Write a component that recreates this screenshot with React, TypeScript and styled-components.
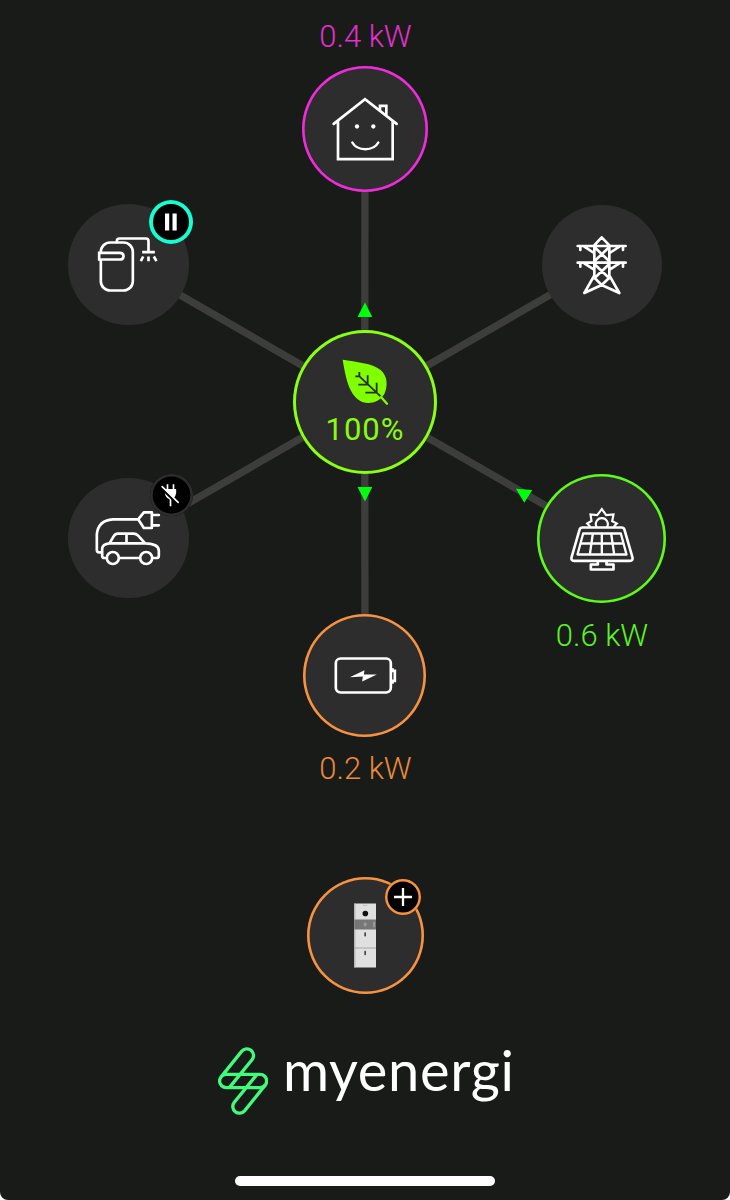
import React from "react";
import styled, { createGlobalStyle } from "styled-components";

const GlobalStyle = createGlobalStyle`
  html, body { margin: 0; padding: 0; background: #fff; }
  * { box-sizing: border-box; }
`;

const SURFACE = "#2d2d2d";
const ORANGE = "#f79240";

const Screen = styled.main`
  display: flex;
  flex-direction: column;
  align-items: center;
  width: 730px;
  height: 1200px;
  overflow: hidden;
  background: #191b18;
  border-radius: 0 0 8px 8px;
  font-family: Roboto, "Liberation Sans", sans-serif;
`;

const FlowMap = styled.section`
  position: relative;
  flex: none;
  width: 730px;
  height: 800px;
`;

const Wires = styled.svg`
  position: absolute;
  inset: 0;
`;

const Disc = styled.div<{ $r: number; $ring?: string; $w?: number }>`
  display: flex;
  flex-direction: column;
  align-items: center;
  justify-content: center;
  flex: none;
  width: ${(p) => p.$r * 2}px;
  height: ${(p) => p.$r * 2}px;
  border-radius: 50%;
  background: ${SURFACE};
  box-shadow: ${(p) => (p.$ring ? `inset 0 0 0 ${p.$w ?? 2.6}px ${p.$ring}` : "none")};
`;

const MapNode = styled(Disc)<{ $x: number; $y: number }>`
  position: absolute;
  left: ${(p) => p.$x - p.$r}px;
  top: ${(p) => p.$y - p.$r}px;
`;

const Badge = styled.div<{ $x: number; $y: number; $r: number; $ring: string; $w: number }>`
  position: absolute;
  left: ${(p) => p.$x - p.$r}px;
  top: ${(p) => p.$y - p.$r}px;
  width: ${(p) => p.$r * 2}px;
  height: ${(p) => p.$r * 2}px;
  display: flex;
  align-items: center;
  justify-content: center;
  border-radius: 50%;
  background: #000;
  box-shadow: inset 0 0 0 ${(p) => p.$w}px ${(p) => p.$ring};
`;

const Reading = styled.div<{ $x: number; $y: number; $color: string }>`
  position: absolute;
  left: ${(p) => p.$x - 80}px;
  top: ${(p) => p.$y - 20}px;
  width: 160px;
  line-height: 40px;
  text-align: center;
  white-space: nowrap;
  font-size: 31px;
  font-weight: 300;
  color: ${(p) => p.$color};
`;

const Share = styled.div`
  margin-top: 7px;
  line-height: 34px;
  font-size: 31px;
  font-weight: 400;
  letter-spacing: 1px;
  color: #88fb14;
`;

const Glyph = styled.svg<{ $size: number }>`
  display: block;
  flex: none;
  width: ${(p) => p.$size}px;
  height: ${(p) => p.$size}px;
  fill: none;
  stroke: #fff;
  stroke-width: 8;
  stroke-linejoin: round;
  stroke-linecap: round;
`;

const HubContent = styled.div`
  display: flex;
  flex-direction: column;
  align-items: center;
  padding-top: 2px;
`;

const DeviceSlot = styled.section`
  position: relative;
  margin-top: 77px;
`;

const Brand = styled.footer`
  display: flex;
  align-items: center;
  width: 294px;
  height: 70px;
  margin-top: 52px;
`;

const BrandMark = styled.svg`
  flex: none;
  width: 50px;
  height: 70px;
`;

const BrandName = styled.span`
  margin: 0 0 22px 15px;
  line-height: 70px;
  font-family: Lato, sans-serif;
  font-size: 56px;
  font-weight: 400;
  letter-spacing: 0.7px;
  color: #fff;
`;

const HomeIndicator = styled.div`
  width: 260px;
  height: 10px;
  margin-top: 60px;
  border-radius: 5px;
  background: #fff;
`;

const House = () => (
  <Glyph $size={80} viewBox="105 235.5 240 240">
    <path d="M131 340 225 266 320 340M144 333V446H308V333M270 298V286H289V312" strokeLinejoin="miter" />
    <path d="M187 396Q198 416 226 416Q254 416 265 396" strokeWidth={7.5} />
    <g fill="#fff" stroke="none">
      <circle cx="201" cy="348" r="6.5" />
      <circle cx="250" cy="348" r="6.5" />
    </g>
  </Glyph>
);

const WaterHeater = () => (
  <Glyph $size={80} viewBox="85.5 103.5 240 240">
    <rect x="124" y="159" width="96" height="144" rx="28" />
    <path d="M172 158V155Q172 147 180 147H259Q267 147 267 155V184" />
    <path d="M119 190V210H181Q192 210 192 200Q192 190 181 190Z" fill={SURFACE} strokeLinejoin="miter" />
    <path d="M248 188H286M251 201 244 215M267 201V215M283 201 291 215" strokeLinecap="butt" />
  </Glyph>
);

const Pylon = () => (
  <Glyph $size={80} viewBox="81 90 240 240">
    <path
      d="M177 152 200 127 224 152M128 153H272M128 203H272M136 153V165M264 153V165M136 203V215M264 203V215M148 155 177 174M253 155 224 174M148 205 177 224M253 205 224 224M178 153V241L148 294 200 270 253 294 223 241V153M178 156 223 199M223 156 178 199M178 207 223 250M223 207 178 250M178 248 200 270 223 248"
    />
  </Glyph>
);

const Leaf = () => (
  <Glyph $size={48} viewBox="168 204 144 144">
    <path
      d="M173 209C212 216 262 219 287 240C308 258 309 288 298 312C284 336 255 344 232 336C192 318 182 263 173 209Z"
      fill="#80ff00"
      stroke="none"
    />
    <path
      d="M221 257 290 322M223 246V259H211M248 256V284H220M275 278V308H241"
      stroke={SURFACE}
      strokeWidth={5.5}
      strokeLinecap="butt"
      strokeLinejoin="miter"
    />
    <path d="M288 321 306 341" stroke="#80ff00" strokeWidth={7} />
  </Glyph>
);

const CarCharger = () => (
  <Glyph $size={80} viewBox="85.5 99 240 240">
    <path d="M125 262H119Q112 262 112 255V208Q116 166 160 163H236L253 142H277V189H253L236 163M281 150H298M281 181H298" />
    <path d="M141 279H135Q128 279 128 272V251Q129 237 150 235L163 213Q167 206 175 206H222Q230 206 236 212L257 235Q298 236 298 257V272Q298 279 291 279H281M150 235H257M201 208V234M180 279H240" />
    <circle cx="160" cy="279" r="18" />
    <circle cx="260" cy="279" r="18" />
  </Glyph>
);

const SolarPanel = () => (
  <Glyph $size={80} viewBox="169.5 100.5 240 240">
    <path d="M231 186H348Q355 186 357 193L381 276Q383 286 373 286H206Q196 286 198 276L222 193Q224 186 231 186Z" />
    <path strokeWidth={7} d="M233 204H346L363 267H216ZM225 234H354M262 204 253 267M289 204V267M317 204 326 267" />
    <path d="M277 288V297H256V312H324V297H303V288" />
    <path
      strokeWidth={6.5}
      strokeLinejoin="miter"
      d="M253 182 245 174 258 166 255 147 275 149 289 131 302 149 324 147 320 167 334 174 326 182M273 184A18 18 0 1 1 305 184"
    />
  </Glyph>
);

const Battery = () => (
  <Glyph $size={80} viewBox="88.5 88.5 240 240">
    <rect x="121" y="159" width="165" height="102" rx="14" />
    <path d="M287 192H291V196H298V226H291V231H287" strokeLinejoin="miter" />
    <path d="M163 215 207 194 205 207 244 207 200 228 202 213Z" fill="#fff" stroke="none" />
  </Glyph>
);

const StorageUnit = () => (
  <Glyph $size={70} viewBox="90 91.5 210 210">
    <g stroke="none">
      <rect x="163" y="99" width="65" height="192" fill="#e0e0e0" />
      <rect x="163" y="99" width="4" height="192" fill="#c4c4c4" />
      <rect x="163" y="147" width="65" height="30" fill="#777" />
      <rect x="163" y="231" width="65" height="3" fill="#a5a5a5" />
      <rect x="189" y="103" width="13" height="3" fill="#bbb" />
      <circle cx="196" cy="129" r="8.5" fill="#111" />
      <rect x="191" y="156" width="9" height="11" rx="3" fill="#999" />
      <rect x="219" y="154" width="6" height="16" fill="#999" />
      <rect x="193" y="185" width="5" height="13" rx="2" fill="#444" />
      <rect x="193" y="241" width="5" height="13" rx="2" fill="#444" />
    </g>
  </Glyph>
);

const PauseGlyph = () => (
  <Glyph $size={20} viewBox="0 0 20 20">
    <path d="M4 1.5h4.2v17H4zM11.5 1.5h4.2v17h-4.2z" fill="#fff" stroke="none" />
  </Glyph>
);

const UnpluggedGlyph = () => (
  <Glyph $size={30} viewBox="289.5 45 90 90">
    <path d="M324 58V73M342 58V73M333 100V124" strokeWidth={5} strokeLinecap="butt" />
    <path d="M316 72H350V84Q347 101 333 104Q319 101 316 84Z" fill="#fff" stroke="none" />
    <path d="M312 74 352 114" stroke="#000" strokeWidth={9} />
    <path d="M308 65 356 112" strokeWidth={5} />
  </Glyph>
);

const PlusGlyph = () => (
  <Glyph $size={20} viewBox="0 0 20 20">
    <path d="M10 1V19M1 10H19" strokeWidth={2.3} strokeLinecap="butt" />
  </Glyph>
);

const SPOKES: [number, number][] = [
  [365, 128],
  [602, 265],
  [602, 538],
  [365, 675],
  [128, 538],
  [128, 265],
];

export default function App() {
  return (
    <>
      <GlobalStyle />
      <Screen>
        <FlowMap>
          <Wires width="730" height="800" viewBox="0 0 730 800">
            {SPOKES.map(([x, y]) => (
              <line key={`${x}-${y}`} x1="364.7" y1="401.5" x2={x} y2={y} stroke="#3d3e3c" strokeWidth="7.3" />
            ))}
            <g fill="#00ff0c">
              <path d="M357.5 317H372.3L365 302.5Z" />
              <path d="M357.5 487H372.3L365 501.5Z" />
              <path d="M516 488.7 532.3 490 524.3 502.7Z" />
            </g>
          </Wires>

          <Reading $x={365.5} $y={37} $color="#e32fce">0.4 kW</Reading>
          <MapNode $x={365} $y={128.5} $r={63} $ring="#f02bdc"><House /></MapNode>
          <MapNode $x={128.5} $y={264.5} $r={60.3}><WaterHeater /></MapNode>
          <Badge $x={171} $y={222} $r={22.3} $ring="#17fdd0" $w={4}><PauseGlyph /></Badge>
          <MapNode $x={601.8} $y={264.8} $r={60.3}><Pylon /></MapNode>
          <MapNode $x={365} $y={401.7} $r={72} $ring="#88ff14" $w={3}>
            <HubContent>
              <Leaf />
              <Share>100%</Share>
            </HubContent>
          </MapNode>
          <MapNode $x={128.5} $y={538} $r={60.3}><CarCharger /></MapNode>
          <Badge $x={171.5} $y={495} $r={21.3} $ring={SURFACE} $w={2.6}><UnpluggedGlyph /></Badge>
          <MapNode $x={601.5} $y={538.5} $r={64.5} $ring="#5dfb1a"><SolarPanel /></MapNode>
          <Reading $x={602} $y={636} $color="#5bf227">0.6 kW</Reading>
          <MapNode $x={364.7} $y={675} $r={61.5} $ring={ORANGE}><Battery /></MapNode>
          <Reading $x={365.5} $y={769} $color="#e98a3c">0.2 kW</Reading>
        </FlowMap>

        <DeviceSlot>
          <Disc $r={58.5} $ring={ORANGE}><StorageUnit /></Disc>
          <Badge $x={96.5} $y={20} $r={18} $ring={ORANGE} $w={2.5}><PlusGlyph /></Badge>
        </DeviceSlot>

        <Brand>
          <BrandMark viewBox="24 33 150 210" fill="none" stroke="#41fb7c" strokeWidth="10">
            <path d="M58 158 126.6 73.5A20 20 0 0 0 95.4 48.5L33.4 125.5A20 20 0 0 0 49 158H150A20 20 0 0 0 150 118H49Q38 118 33.4 125.5" />
            <path d="M141 118 72.4 202.5A20 20 0 0 0 103.6 227.5L165.6 150.5" />
          </BrandMark>
          <BrandName>myenergi</BrandName>
        </Brand>

        <HomeIndicator />
      </Screen>
    </>
  );
}
